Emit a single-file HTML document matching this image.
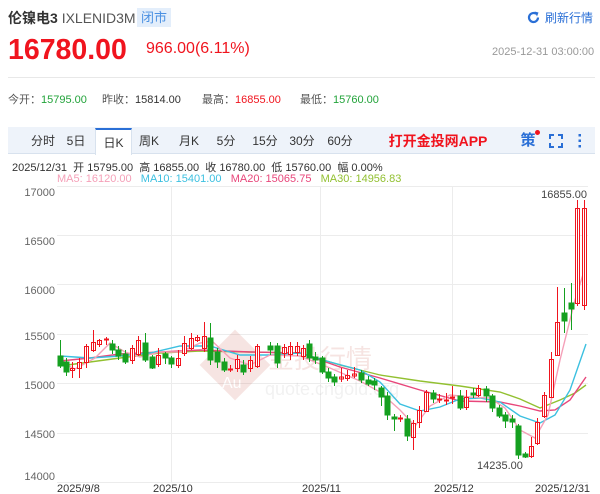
<!DOCTYPE html>
<html><head><meta charset="utf-8"><style>
*{margin:0;padding:0;box-sizing:border-box}
body{width:600px;height:494px;background:#fff;font-family:"Liberation Sans","Noto Sans CJK SC",sans-serif;position:relative;overflow:hidden;color:#333}
.a{position:absolute;white-space:nowrap}
.tab{position:absolute;top:128px;height:26px;line-height:26px;font-size:12px;color:#333;text-align:center}
</style></head><body>
<div class="a" style="left:8px;top:8px;font-size:14px;font-weight:bold;color:#333">伦镍电3 <span style="font-weight:normal;color:#555">IXLENID3M</span></div>
<div class="a" style="left:137px;top:8px;width:34px;height:19px;background:#e3eefb;color:#4a90e2;font-size:13px;line-height:19px;text-align:center">闭市</div>
<svg class="a" style="left:527px;top:11px" width="13" height="13" viewBox="0 0 13 13"><path d="M11 6.5A4.5 4.5 0 1 1 9.2 2.9" fill="none" stroke="#2a6fd6" stroke-width="2.2"/><path d="M7.5 0.5L11.5 1.5L10 5.5Z" fill="#2a6fd6"/></svg>
<div class="a" style="left:545px;top:9px;font-size:12px;color:#2a6fd6">刷新行情</div>
<div class="a" style="left:8px;top:34px;font-size:28.5px;font-weight:bold;color:#f0141e">16780.00</div>
<div class="a" style="left:146px;top:40px;font-size:16px;color:#f0141e">966.00(6.11%)</div>
<div class="a" style="left:492px;top:46px;font-size:11px;color:#999">2025-12-31 03:00:00</div>
<div class="a" style="left:8px;top:77px;width:587px;height:1px;background:#e8e8e8"></div>
<div class="a" style="left:8px;top:91px;font-size:11px;color:#555">今开：<span style="color:#22a33a">15795.00</span></div>
<div class="a" style="left:102px;top:91px;font-size:11px;color:#555">昨收：<span style="color:#333">15814.00</span></div>
<div class="a" style="left:202px;top:91px;font-size:11px;color:#555">最高：<span style="color:#f0141e">16855.00</span></div>
<div class="a" style="left:300px;top:91px;font-size:11px;color:#555">最低：<span style="color:#22a33a">15760.00</span></div>
<div class="a" style="left:8px;top:127px;width:587px;height:27px;background:#eef3fa;border-bottom:1px solid #d8e2ee"></div>
<div class="tab" style="left:28px;width:30px">分时</div>
<div class="tab" style="left:64px;width:24px">5日</div>
<div class="tab" style="left:95px;width:37px;background:#fff;border-top:2px solid #2a6fd6;height:27px;border-left:1px solid #d8e2ee;border-right:1px solid #d8e2ee">日K</div>
<div class="tab" style="left:136px;width:26px">周K</div>
<div class="tab" style="left:176px;width:26px">月K</div>
<div class="tab" style="left:215px;width:22px">5分</div>
<div class="tab" style="left:250px;width:30px">15分</div>
<div class="tab" style="left:287px;width:30px">30分</div>
<div class="tab" style="left:325px;width:30px">60分</div>
<div class="tab" style="left:358px;width:160px;color:#f0141e;font-weight:bold;font-size:14px">打开金投网APP</div>
<div class="tab" style="left:520px;width:16px;color:#2a6fd6;font-size:15px;font-weight:bold">策</div>
<div class="a" style="left:535px;top:130px;width:5px;height:5px;border-radius:50%;background:#f0141e"></div>
<svg class="a" style="left:549px;top:134px" width="14" height="14"><path d="M1 5V1H5M9 1H13V5M13 9V13H9M5 13H1V9" fill="none" stroke="#2a6fd6" stroke-width="2"/></svg>
<svg class="a" style="left:578px;top:133px" width="4" height="16"><rect x="0.5" y="1" width="2.5" height="2.5" fill="#2a6fd6"/><rect x="0.5" y="6.5" width="2.5" height="2.5" fill="#2a6fd6"/><rect x="0.5" y="12" width="2.5" height="2.5" fill="#2a6fd6"/></svg>
<div class="a" style="left:12px;top:159px;font-size:11px;color:#333">2025/12/31 &nbsp;开 15795.00 &nbsp;高 16855.00 &nbsp;收 16780.00 &nbsp;低 15760.00 &nbsp;幅 0.00%</div>
<div class="a" style="left:57px;top:173px;font-size:11px"><span style="color:#f5a0b8">MA5: 16120.00</span> &nbsp;&nbsp;<span style="color:#3cc0e0">MA10: 15401.00</span> &nbsp;&nbsp;<span style="color:#e8467a">MA20: 15065.75</span> &nbsp;&nbsp;<span style="color:#92c030">MA30: 14956.83</span></div>
<svg class="a" style="left:0;top:0" width="600" height="494" font-family="Liberation Sans, sans-serif">
<g stroke="#ececec" stroke-width="1">
<line x1="57" y1="186.5" x2="588" y2="186.5"/><line x1="57" y1="235.5" x2="588" y2="235.5"/><line x1="57" y1="284.5" x2="588" y2="284.5"/><line x1="57" y1="334.5" x2="588" y2="334.5"/><line x1="57" y1="383.5" x2="588" y2="383.5"/><line x1="57" y1="433.5" x2="588" y2="433.5"/><line x1="57" y1="482.5" x2="588" y2="482.5"/>
<line x1="171.5" y1="186" x2="171.5" y2="482"/><line x1="320.5" y1="186" x2="320.5" y2="482"/><line x1="452.5" y1="186" x2="452.5" y2="482"/>
</g>
<g font-size="11" fill="#666" text-anchor="end">
<text x="55" y="196">17000</text><text x="55" y="245">16500</text><text x="55" y="294">16000</text><text x="55" y="340">15500</text><text x="55" y="389">15000</text><text x="55" y="438">14500</text><text x="55" y="480">14000</text>
</g>
<g font-size="11" fill="#333">
<text x="57" y="492">2025/9/8</text><text x="153" y="492">2025/10</text><text x="302" y="492">2025/11</text><text x="434" y="492">2025/12</text><text x="535" y="492">2025/12/31</text>
</g>
<g opacity="0.13">
<rect x="210" y="340" width="50" height="50" transform="rotate(45 235 365)" fill="#c0392b"/>
<text x="222" y="388" font-size="16" fill="#fff">Au</text>
<text x="268" y="368" font-size="26" fill="#c0392b">金投行情</text>
<text x="265" y="395" font-size="18" fill="#999">quote.cngold.org</text>
</g>
<g fill="none" stroke-width="1.4">
<polyline stroke="#92c030" points="60,366 90,362 120,358 160,353 200,351 250,352 300,353 340,365 380,375 420,381 460,386 500,392 520,399 540,408 560,400 575,393 586,385"/>
<polyline stroke="#e8467a" points="60,361 90,358 120,354 160,352 200,350 250,352 300,353 340,367 380,378 420,390 460,401 500,402 520,406 540,411 555,410 570,400 586,377"/>
<polyline stroke="#3cc0e0" points="60,356 90,358 120,356 150,353 180,346 210,346 240,355 270,355 300,353 330,362 360,370 380,382 400,404 420,411 440,407 460,399 480,398 500,402 520,416 540,423 555,415 570,390 586,344"/>
<polyline stroke="#f5a0b8" points="60,362 75,369 95,358 110,343 125,352 140,357 160,352 180,352 200,343 212,341 230,358 250,365 270,355 300,356 330,368 360,381 380,392 400,410 415,426 430,406 450,395 470,397 490,398 505,408 520,430 535,438 548,415 560,360 575,300 586,265"/>
</g>
<g stroke-width="1">
<g fill="#15a020" stroke="#15a020">
<rect x="58" y="356" width="5" height="10"/><line x1="60.5" y1="340" x2="60.5" y2="368"/>
<rect x="64" y="362" width="5" height="10"/><line x1="66.5" y1="358" x2="66.5" y2="376"/>
<rect x="110" y="344" width="5" height="6"/><line x1="112.5" y1="340" x2="112.5" y2="354"/>
<rect x="116" y="350" width="5" height="6"/><line x1="118.5" y1="346" x2="118.5" y2="360"/>
<rect x="123" y="354" width="5" height="8"/><line x1="125.5" y1="350" x2="125.5" y2="364"/>
<rect x="143" y="343" width="5" height="17"/><line x1="145.5" y1="333" x2="145.5" y2="362"/>
<rect x="150" y="357" width="5" height="11"/><line x1="152.5" y1="355" x2="152.5" y2="369"/>
<rect x="163" y="354" width="5" height="4"/><line x1="165.5" y1="352" x2="165.5" y2="364"/>
<rect x="169" y="358" width="5" height="6"/><line x1="171.5" y1="356" x2="171.5" y2="368"/>
<rect x="208" y="338" width="5" height="22"/><line x1="210.5" y1="323" x2="210.5" y2="365"/>
<rect x="215" y="352" width="5" height="10"/><line x1="217.5" y1="348" x2="217.5" y2="368"/>
<rect x="222" y="362" width="5" height="8"/><line x1="224.5" y1="358" x2="224.5" y2="372"/>
<rect x="241" y="365" width="5" height="7"/><line x1="243.5" y1="360" x2="243.5" y2="375"/>
<rect x="268" y="346" width="5" height="4"/><line x1="270.5" y1="342" x2="270.5" y2="355"/>
<rect x="275" y="346" width="5" height="17"/><line x1="277.5" y1="343" x2="277.5" y2="368"/>
<rect x="307" y="344" width="5" height="14"/><line x1="309.5" y1="340" x2="309.5" y2="362"/>
<rect x="313" y="357" width="5" height="3"/><line x1="315.5" y1="352" x2="315.5" y2="364"/>
<rect x="320" y="358" width="5" height="14"/><line x1="322.5" y1="356" x2="322.5" y2="374"/>
<rect x="326" y="372" width="5" height="6"/><line x1="328.5" y1="368" x2="328.5" y2="382"/>
<rect x="332" y="377" width="5" height="5"/><line x1="334.5" y1="374" x2="334.5" y2="386"/>
<rect x="359" y="373" width="5" height="7"/><line x1="361.5" y1="370" x2="361.5" y2="383"/>
<rect x="366" y="380" width="5" height="4"/><line x1="368.5" y1="376" x2="368.5" y2="386"/>
<rect x="372" y="381" width="5" height="4"/><line x1="374.5" y1="378" x2="374.5" y2="390"/>
<rect x="379" y="388" width="5" height="9"/><line x1="381.5" y1="386" x2="381.5" y2="406"/>
<rect x="385" y="396" width="5" height="19"/><line x1="387.5" y1="392" x2="387.5" y2="420"/>
<rect x="392" y="417" width="5" height="2"/><line x1="394.5" y1="414" x2="394.5" y2="431"/>
<rect x="405" y="419" width="5" height="17"/><line x1="407.5" y1="415" x2="407.5" y2="441"/>
<rect x="431" y="393" width="5" height="6"/><line x1="433.5" y1="390" x2="433.5" y2="403"/>
<rect x="458" y="396" width="5" height="12"/><line x1="460.5" y1="390" x2="460.5" y2="410"/>
<rect x="471" y="393" width="5" height="2"/><line x1="473.5" y1="388" x2="473.5" y2="398"/>
<rect x="484" y="389" width="5" height="7"/><line x1="486.5" y1="386" x2="486.5" y2="402"/>
<rect x="490" y="396" width="5" height="12"/><line x1="492.5" y1="394" x2="492.5" y2="412"/>
<rect x="497" y="408" width="5" height="8"/><line x1="499.5" y1="405" x2="499.5" y2="418"/>
<rect x="503" y="415" width="5" height="6"/><line x1="505.5" y1="412" x2="505.5" y2="428"/>
<rect x="510" y="419" width="5" height="3"/><line x1="512.5" y1="415" x2="512.5" y2="428"/>
<rect x="516" y="426" width="5" height="29"/><line x1="518.5" y1="424" x2="518.5" y2="459"/>
<rect x="523" y="454" width="5" height="3"/><line x1="525.5" y1="452" x2="525.5" y2="458"/>
<rect x="562" y="313" width="5" height="8"/><line x1="564.5" y1="288" x2="564.5" y2="333"/>
<rect x="569" y="303" width="5" height="6"/><line x1="571.5" y1="283" x2="571.5" y2="330"/>
</g>
<g fill="#fff" stroke="#f0141e">
<rect x="70.5" y="368.5" width="4" height="2"/><line x1="72.5" y1="362" x2="72.5" y2="378"/>
<rect x="77.5" y="362.5" width="4" height="6"/><line x1="79.5" y1="358" x2="79.5" y2="378"/>
<rect x="84.5" y="346.5" width="4" height="16"/><line x1="86.5" y1="344" x2="86.5" y2="368"/>
<rect x="91.5" y="342.5" width="4" height="8"/><line x1="93.5" y1="330" x2="93.5" y2="352"/>
<rect x="97.5" y="340.5" width="4" height="4"/><line x1="99.5" y1="339" x2="99.5" y2="347"/>
<rect x="104.5" y="339" width="4" height="1"/><line x1="106.5" y1="337" x2="106.5" y2="345"/>
<rect x="130.5" y="348.5" width="4" height="12"/><line x1="132.5" y1="345" x2="132.5" y2="364"/>
<rect x="136.5" y="340.5" width="4" height="14"/><line x1="138.5" y1="336" x2="138.5" y2="356"/>
<rect x="156.5" y="355.5" width="4" height="9"/><line x1="158.5" y1="348" x2="158.5" y2="367"/>
<rect x="176.5" y="358.5" width="4" height="7"/><line x1="178.5" y1="350" x2="178.5" y2="368"/>
<rect x="182.5" y="343.5" width="4" height="10"/><line x1="184.5" y1="336" x2="184.5" y2="356"/>
<rect x="189.5" y="338.5" width="4" height="10"/><line x1="191.5" y1="333" x2="191.5" y2="350"/>
<rect x="195.5" y="337.5" width="4" height="3"/><line x1="197.5" y1="335" x2="197.5" y2="342"/>
<rect x="202.5" y="336.5" width="4" height="12"/><line x1="204.5" y1="322" x2="204.5" y2="352"/>
<rect x="228.5" y="369" width="4" height="1"/><line x1="230.5" y1="365" x2="230.5" y2="372"/>
<rect x="235.5" y="359.5" width="4" height="9"/><line x1="237.5" y1="355" x2="237.5" y2="372"/>
<rect x="248.5" y="360.5" width="4" height="8"/><line x1="250.5" y1="356" x2="250.5" y2="372"/>
<rect x="255.5" y="346.5" width="4" height="20"/><line x1="257.5" y1="344" x2="257.5" y2="368"/>
<rect x="282.5" y="347.5" width="4" height="6"/><line x1="284.5" y1="344" x2="284.5" y2="358"/>
<rect x="288.5" y="346.5" width="4" height="8"/><line x1="290.5" y1="342" x2="290.5" y2="360"/>
<rect x="295.5" y="346.5" width="4" height="6"/><line x1="297.5" y1="342" x2="297.5" y2="356"/>
<rect x="301.5" y="348.5" width="4" height="8"/><line x1="303.5" y1="345" x2="303.5" y2="360"/>
<rect x="339.5" y="377" width="4" height="2"/><line x1="341.5" y1="368" x2="341.5" y2="382"/>
<rect x="345.5" y="375.5" width="4" height="3"/><line x1="347.5" y1="370" x2="347.5" y2="381"/>
<rect x="352.5" y="374" width="4" height="2"/><line x1="354.5" y1="367" x2="354.5" y2="378"/>
<rect x="398.5" y="418" width="4" height="1"/><line x1="400.5" y1="415" x2="400.5" y2="422"/>
<rect x="411.5" y="423.5" width="4" height="14"/><line x1="413.5" y1="420" x2="413.5" y2="450"/>
<rect x="417.5" y="410.5" width="4" height="12"/><line x1="419.5" y1="406" x2="419.5" y2="428"/>
<rect x="424.5" y="392.5" width="4" height="19"/><line x1="426.5" y1="390" x2="426.5" y2="412"/>
<rect x="437.5" y="399" width="4" height="1"/><line x1="439.5" y1="394" x2="439.5" y2="403"/>
<rect x="444.5" y="400" width="4" height="1"/><line x1="446.5" y1="393" x2="446.5" y2="405"/>
<rect x="450.5" y="397" width="4" height="1"/><line x1="452.5" y1="386" x2="452.5" y2="404"/>
<rect x="464.5" y="397.5" width="4" height="10"/><line x1="466.5" y1="390" x2="466.5" y2="410"/>
<rect x="476.5" y="388.5" width="4" height="7"/><line x1="478.5" y1="385" x2="478.5" y2="397"/>
<rect x="529.5" y="446.5" width="4" height="10"/><line x1="531.5" y1="437" x2="531.5" y2="458"/>
<rect x="535.5" y="422.5" width="4" height="21"/><line x1="537.5" y1="418" x2="537.5" y2="445"/>
<rect x="542.5" y="395.5" width="4" height="21"/><line x1="544.5" y1="392" x2="544.5" y2="418"/>
<rect x="549.5" y="359.5" width="4" height="38"/><line x1="551.5" y1="352" x2="551.5" y2="398"/>
<rect x="555.5" y="322.5" width="4" height="33"/><line x1="557.5" y1="287" x2="557.5" y2="356"/>
<rect x="575.5" y="208.5" width="4" height="95"/><line x1="577.5" y1="200" x2="577.5" y2="306"/>
<rect x="582.5" y="208.5" width="4" height="97"/><line x1="584.5" y1="200" x2="584.5" y2="310"/>
</g>
</g>
<text x="587" y="198" font-size="11" fill="#444" text-anchor="end">16855.00</text>
<text x="477" y="469" font-size="11" fill="#444">14235.00</text>
</svg>
</body></html>
